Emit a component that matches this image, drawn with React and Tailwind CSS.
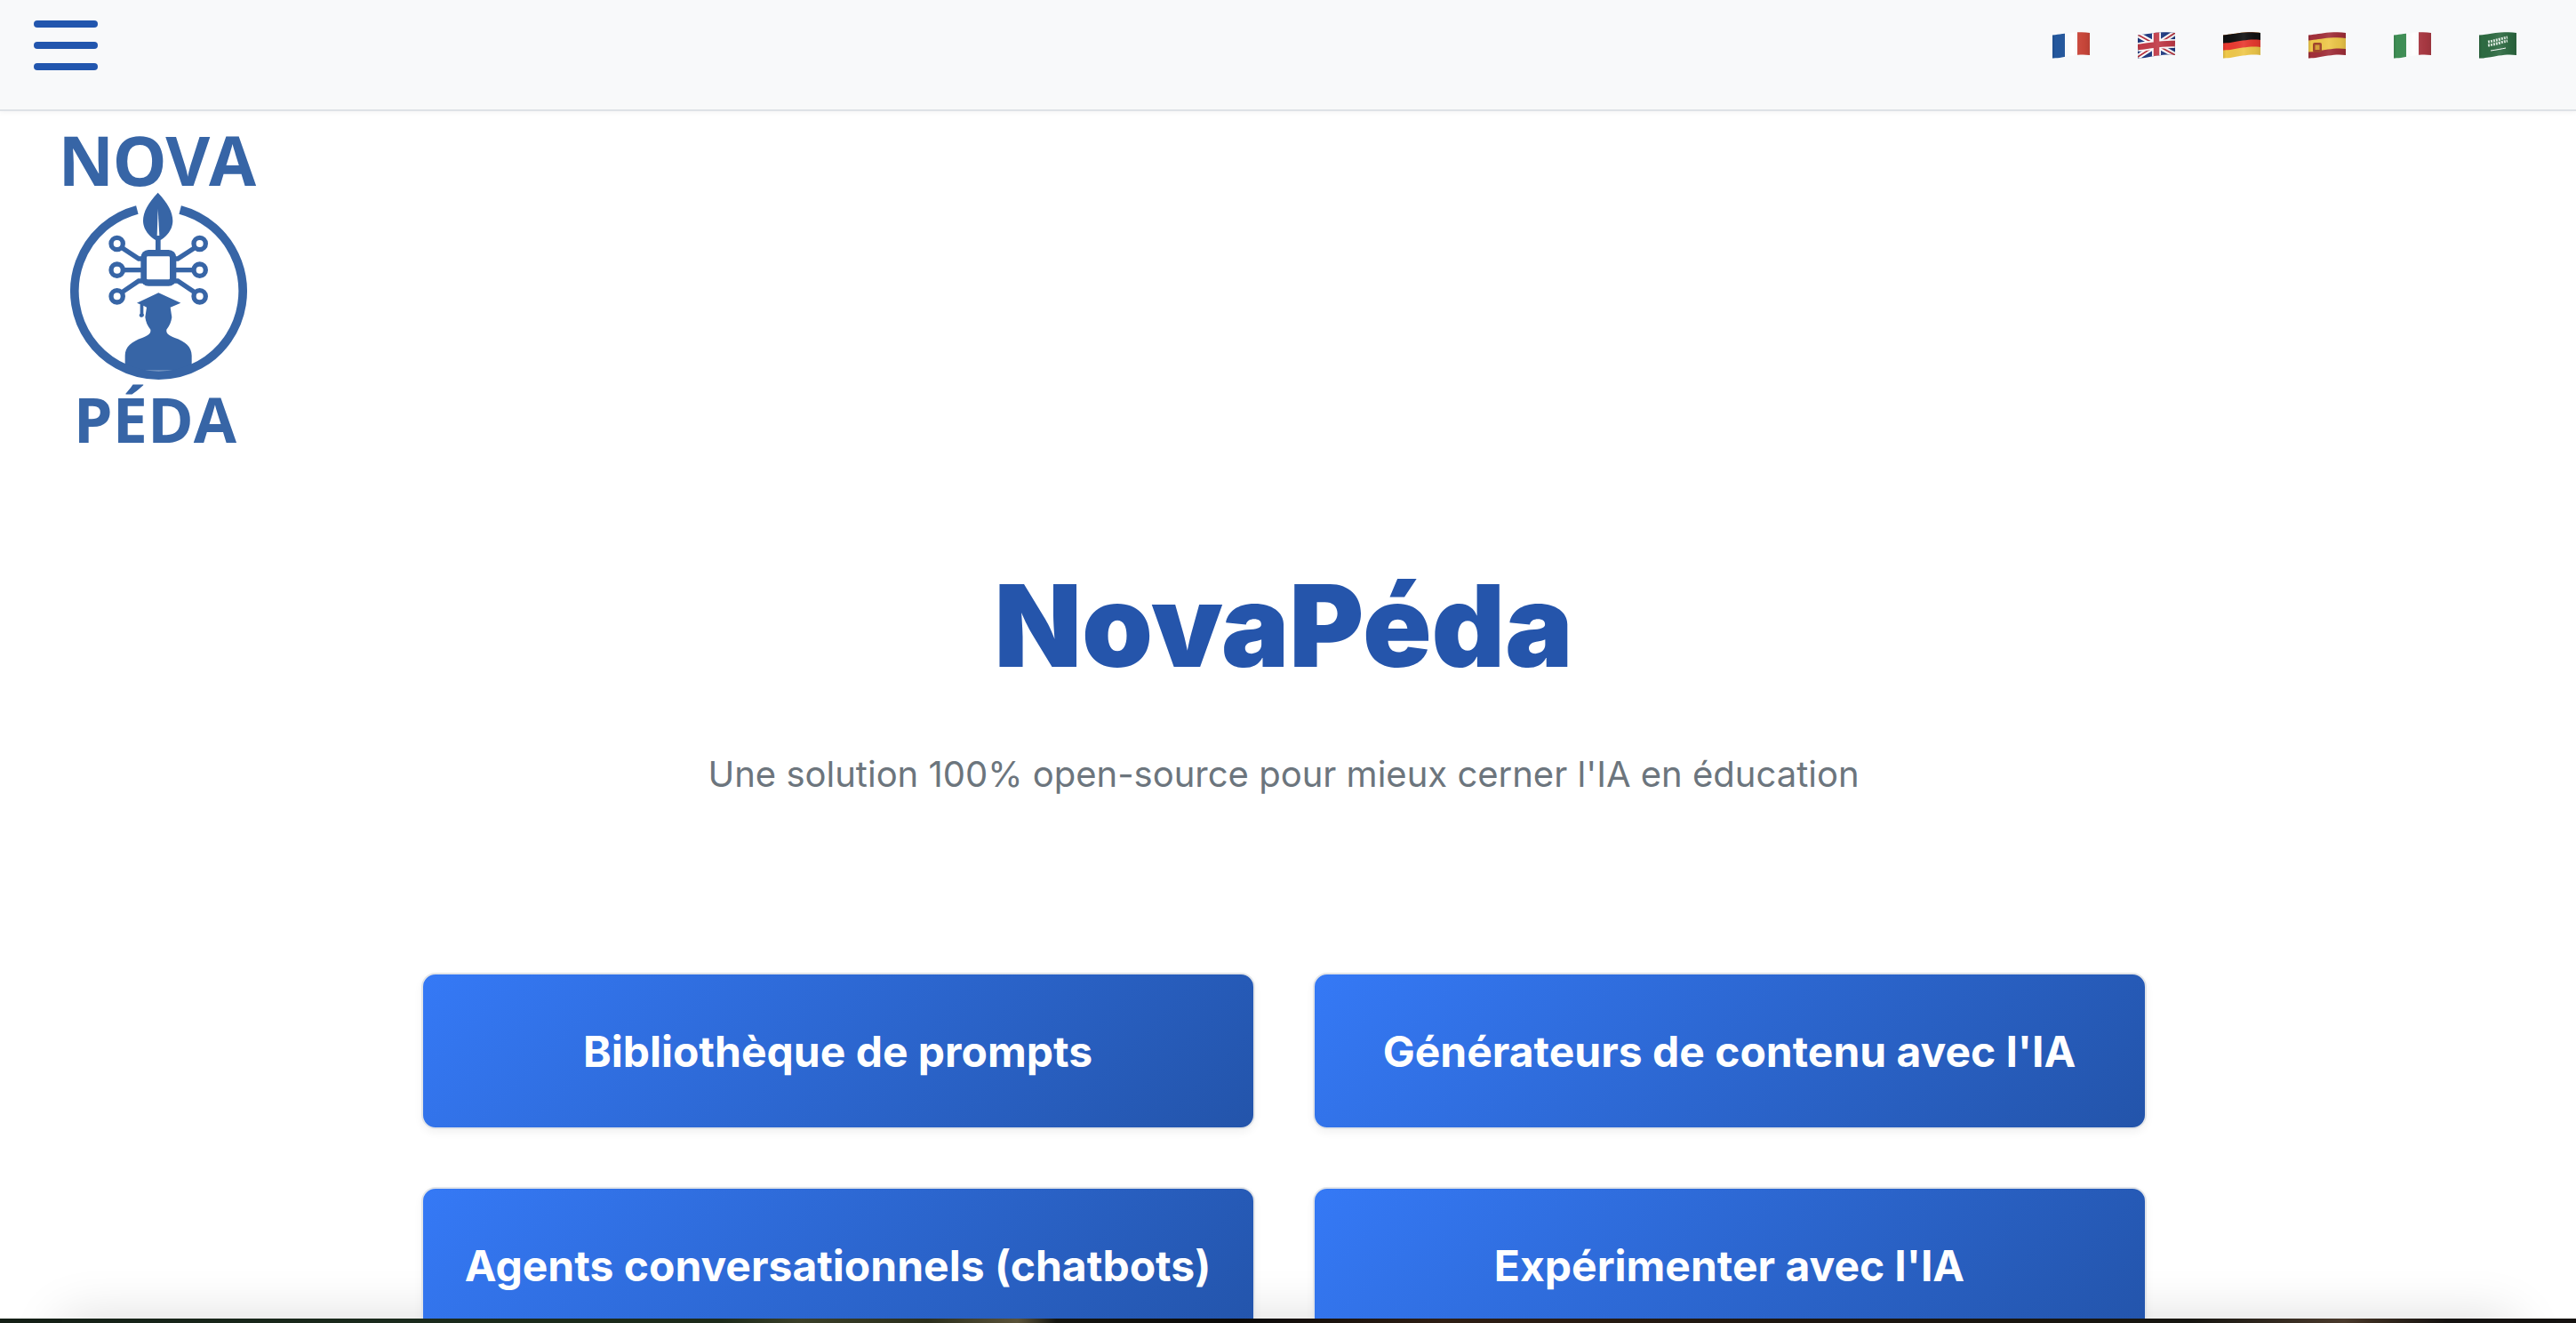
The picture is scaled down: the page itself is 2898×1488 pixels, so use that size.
const Flag = ({ id, children }) => (
  <button className="block w-[42px] h-[30px] shrink-0">
    <svg viewBox="0 0 42 30" width="42" height="30">
      <defs>
        <clipPath id={id}>
          <path d="M0 3.5 C8 3 14 1.5 24 0.6 C31 0 37 0 42 1 L42 26 C36 25 30 25.2 22 26.6 C13 28.2 7 29.6 0 29.5 Z" />
        </clipPath>
        <linearGradient id={`${id}-s`} x1="0" x2="1" y1="0" y2="0">
          <stop offset="0" stopColor="#000" stopOpacity="0.12" />
          <stop offset="0.08" stopColor="#000" stopOpacity="0" />
          <stop offset="0.55" stopColor="#fff" stopOpacity="0.08" />
          <stop offset="0.85" stopColor="#000" stopOpacity="0.05" />
          <stop offset="1" stopColor="#000" stopOpacity="0.12" />
        </linearGradient>
      </defs>
      <g clipPath={`url(#${id})`}>
        {children}
        <rect width="42" height="30" fill={`url(#${id}-s)`} />
      </g>
    </svg>
  </button>
);

const Wave = ({ y, h, fill }) => (
  <path
    fill={fill}
    d={`M0 ${y + 3.5} C8 ${y + 3} 14 ${y + 1.5} 24 ${y + 0.6} C31 ${y} 37 ${y} 42 ${y + 1} L42 ${y + h + 1} C36 ${y + h} 30 ${y + h + 0.2} 22 ${y + h + 1.6} C13 ${y + h + 3.2} 7 ${y + h + 4.6} 0 ${y + h + 4.5} Z`}
  />
);

const Logo = () => (
  <div className="flex flex-col items-center w-[352px] pt-[16px]">
    <div className="font-['Open_Sans',sans-serif] font-bold text-[#3765a6] text-[77px] leading-[78px] h-[74px] tracking-[-1.5px]">NOVA</div>
    <svg viewBox="0 0 780 720" width="260" height="240" className="-mt-[15px] -mb-[4px] ml-[7px]">
      <g fill="#3765a6">
        <path d="M383 50 C350 85 333 115 333 145 C333 175 355 198 375 210 L375 245 L392 245 L392 210 C412 198 433 175 433 145 C433 115 416 85 383 50 Z" />
        <rect x="325" y="243" width="120" height="122" rx="26" />
        <path d="M312 422 L385 388 L460 422 L425 437 L430 470 C428 485 422 500 412 512 C410 525 420 532 440 540 C475 552 497 570 497 600 L497 650 L272 650 L272 600 C272 570 295 552 330 540 C350 532 360 525 358 512 C348 500 342 485 340 470 L345 437 L334 431 L334 458 C338 462 336 470 327 470 C320 470 318 462 323 458 L323 427 Z" />
      </g>
      <path d="M383 105 L380 195 L388 195 Z" fill="#ffffff" />
      <rect x="345" y="265" width="78" height="78" rx="4" fill="#ffffff" />
      <path d="M313 108 A284 284 0 1 0 458 108" fill="none" stroke="#3765a6" strokeWidth="29" />
      <g fill="none" stroke="#3765a6" strokeWidth="16">
        <path d="M262 236 L318 273 L335 273" />
        <path d="M265 311 L335 311" />
        <path d="M262 386 L318 348 L335 348" />
        <path d="M507 236 L450 273 L435 273" />
        <path d="M503 311 L435 311" />
        <path d="M507 386 L450 348 L435 348" />
        <circle cx="245" cy="222" r="20" fill="#ffffff" />
        <circle cx="245" cy="311" r="20" fill="#ffffff" />
        <circle cx="245" cy="400" r="20" fill="#ffffff" />
        <circle cx="524" cy="222" r="20" fill="#ffffff" />
        <circle cx="524" cy="311" r="20" fill="#ffffff" />
        <circle cx="524" cy="400" r="20" fill="#ffffff" />
      </g>
    </svg>
    <div className="-ml-[3px] font-['Open_Sans',sans-serif] font-bold text-[#3765a6] text-[70px] leading-[70px] h-[70px]">PÉDA</div>
  </div>
);

const CardButton = ({ children }) => (
  <a className="relative z-10 flex items-center justify-center h-[176px] pt-[2px] rounded-[16px] border-2 border-[#e2e5e9] bg-[linear-gradient(135deg,#3579f6,#2354aa)] bg-origin-border text-white font-bold text-[48px] shadow-[0_4px_10px_rgba(0,0,0,0.05)]">
    {children}
  </a>
);

export default function App() {
  return (
    <div className="h-screen overflow-hidden flex flex-col font-['Inter',sans-serif]">
      <div className="flex-1 min-h-0 overflow-hidden">
        <header className="h-[125px] bg-[#f8f9fa] border-b-2 border-[#dee2e6] shadow-[0_2px_5px_rgba(0,0,0,0.04)] flex items-start justify-between pl-[38px] pr-[67px]">
          <button className="flex flex-col gap-[16px] pt-[23px] w-[72px]">
            <span className="block h-[8px] rounded-full bg-[#2256ae]" />
            <span className="block h-[8px] rounded-full bg-[#2256ae]" />
            <span className="block h-[8px] rounded-full bg-[#2256ae]" />
          </button>
          <nav className="flex gap-[54px] pt-[36px]">
            <Flag id="fr">
              <rect width="14" height="30" fill="#24589e" />
              <rect x="14" width="14" height="30" fill="#ffffff" />
              <rect x="28" width="14" height="30" fill="#d0493c" />
            </Flag>
            <Flag id="gb">
              <rect width="42" height="30" fill="#1f3a82" />
              <path d="M0 3 L42 26 M0 28 L42 1" stroke="#ffffff" strokeWidth="6" />
              <path d="M0 3 L42 26 M0 28 L42 1" stroke="#b8333f" strokeWidth="1.8" />
              <path d="M21 0 V30 M0 17 C12 16 28 12 42 13" stroke="#ffffff" strokeWidth="10" fill="none" />
              <path d="M21 0 V30 M0 17 C12 16 28 12 42 13" stroke="#c23b48" strokeWidth="6.5" fill="none" />
            </Flag>
            <Flag id="de">
              <rect width="42" height="30" fill="#efc84a" />
              <Wave y={0} h={16} fill="#e93a30" />
              <Wave y={-1} h={9} fill="#111111" />
            </Flag>
            <Flag id="es">
              <rect width="42" height="30" fill="#a2303a" />
              <Wave y={6} h={12} fill="#efc84a" />
              <rect x="5" y="12" width="10" height="11" rx="2" fill="#a2452c" />
              <rect x="7.5" y="14.5" width="5" height="5.5" fill="#d8a23a" />
            </Flag>
            <Flag id="it">
              <rect width="14" height="30" fill="#3f8f55" />
              <rect x="14" width="14" height="30" fill="#ffffff" />
              <rect x="28" width="14" height="30" fill="#ae3a44" />
            </Flag>
            <Flag id="sa">
              <rect width="42" height="30" fill="#2e6b42" />
              <path d="M10 11 C18 10 26 7 32 6 M10 15 C18 14 26 11 32 10" stroke="#d7e6da" strokeWidth="3" strokeDasharray="2 1" fill="none" />
              <path d="M13 21 C20 20 25 19 30 18" stroke="#ffffff" strokeWidth="1" fill="none" />
            </Flag>
          </nav>
        </header>
        <Logo />
        <main className="flex flex-col items-center pr-[10px]">
          <h1 className="mt-[120px] font-black text-[#2555ab] text-[128px] leading-[155px]">NovaPéda</h1>
          <p className="mt-[60px] text-[#6c757d] text-[40px] leading-[60px]">Une solution 100% open-source pour mieux cerner l'IA en éducation</p>
          <div className="mt-[193px] grid grid-cols-2 gap-[65px] w-[1941px]">
            <CardButton>Bibliothèque de prompts</CardButton>
            <CardButton>Générateurs de contenu avec l'IA</CardButton>
            <CardButton>Agents conversationnels (chatbots)</CardButton>
            <CardButton>Expérimenter avec l'IA</CardButton>
          </div>
        </main>
      </div>
      <div className="relative h-[5px] shrink-0 bg-[linear-gradient(90deg,#141f16_0%,#1a2a1c_15%,#1c2a1a_28%,#3a3f28_31%,#2a2e1c_36%,#5a5238_39.5%,#141510_41%,#0a0908_48%,#2e1e14_56%,#1c1610_70%,#161510_85%,#4a3a2c_91%,#3a2c20_92%,#141210_95%,#151210_100%)]">
        <div className="absolute inset-x-[70px] top-0 h-[100px] shadow-[0_0_60px_rgba(0,0,0,0.14)]" />
      </div>
    </div>
  );
}
